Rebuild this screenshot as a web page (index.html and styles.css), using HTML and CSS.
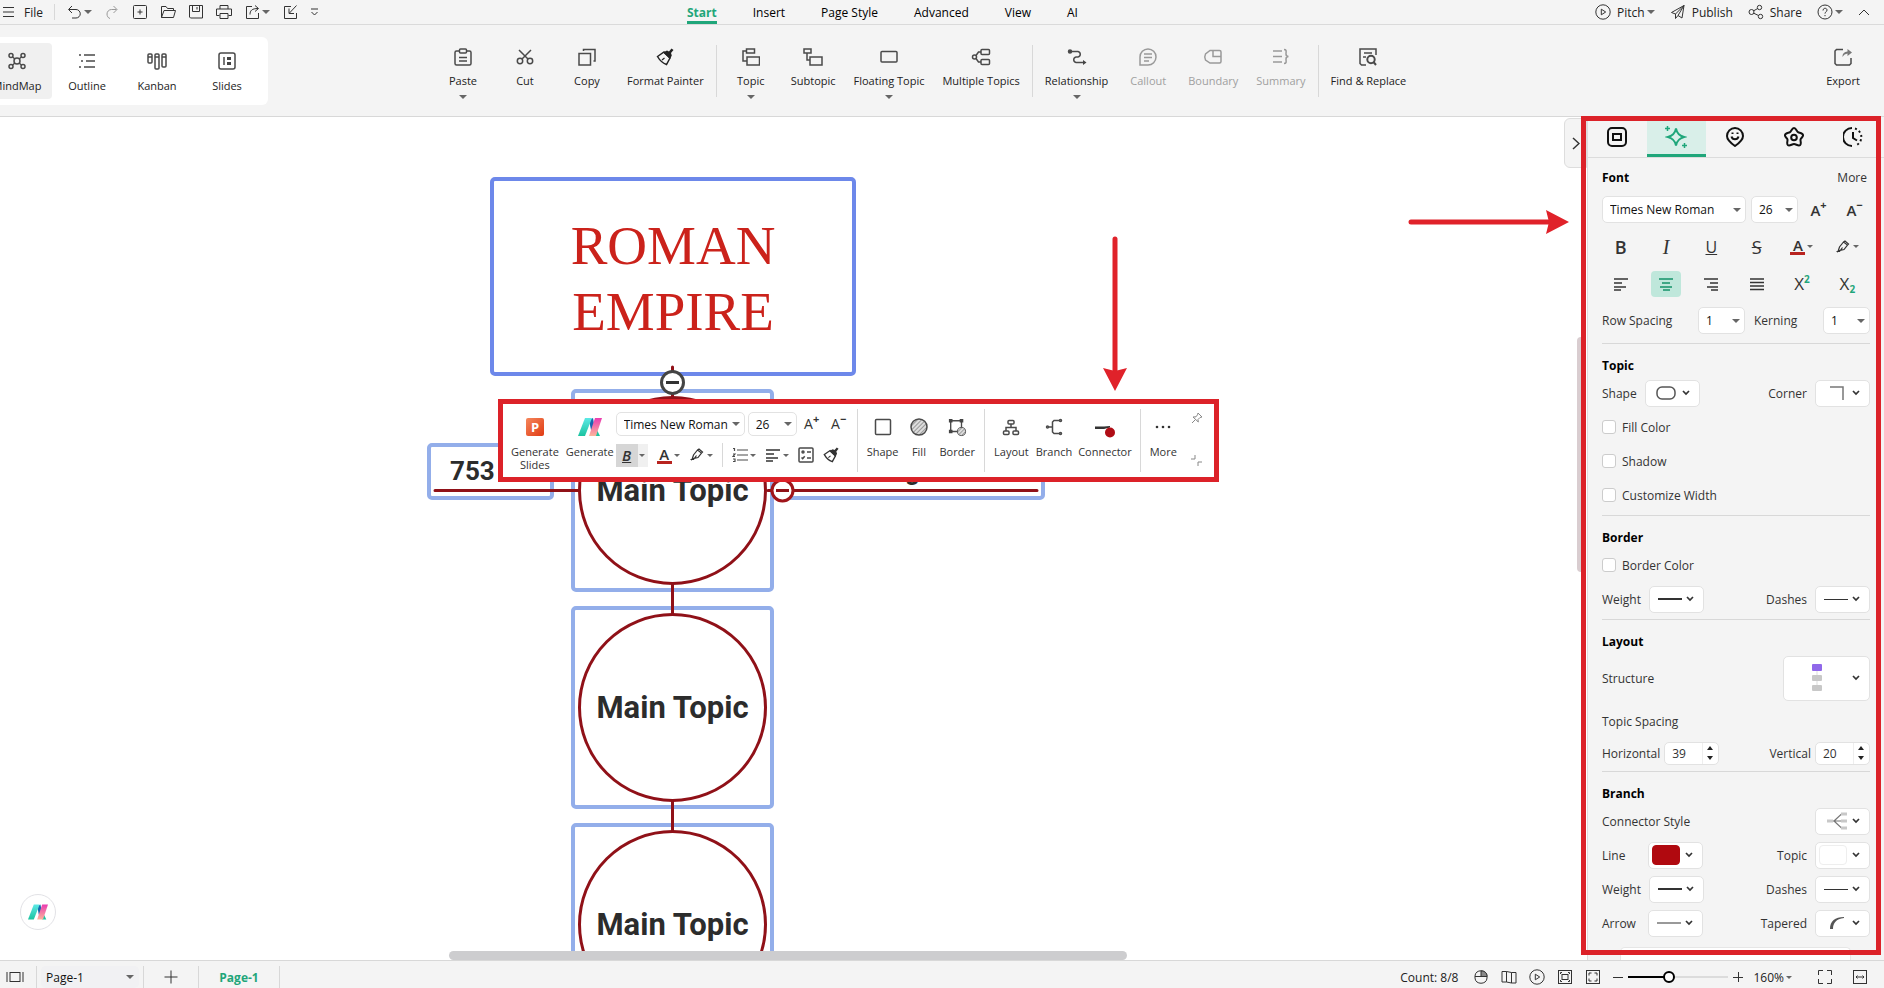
FILE: index.html
```
<!DOCTYPE html>
<html lang="en">
<head>
  <meta charset="UTF-8">
  <meta name="viewport" content="width=device-width, initial-scale=1.0">
  <title>Mind Map Editor</title>
  <link rel="stylesheet" href="styles.css">
</head>
<body>
  <!-- Shared icons -->
  <svg class="sprite" aria-hidden="true">
    <defs>
      <linearGradient id="teal" x1="0" y1="0" x2="0" y2="1"><stop offset="0" stop-color="#5ce9e6"/><stop offset="1" stop-color="#1cc3a0"/></linearGradient>
      <linearGradient id="pink" x1="0" y1="0" x2="0" y2="1"><stop offset="0" stop-color="#ea3bb0"/><stop offset="1" stop-color="#fbb59c"/></linearGradient>
      <linearGradient id="orange" x1="0" y1="0" x2="1" y2="1"><stop offset="0" stop-color="#f5875c"/><stop offset="1" stop-color="#e03a12"/></linearGradient>
      <pattern id="hatch" width="3" height="3" patternUnits="userSpaceOnUse" patternTransform="rotate(45)"><rect width="3" height="3" fill="#ddd"/><path d="M0 0V3" stroke="#999" stroke-width="2"/></pattern>
    </defs>
    <symbol id="i-logo" viewBox="0 0 24 18">
      <path d="M11 2l4-2 3 17h-4z" fill="#1766b0"/>
      <path d="M18 10l4 8h-5z" fill="#1cc3a0"/>
      <path d="M7 0h7L7 18H0z" fill="url(#teal)"/>
      <path d="M17 0h7l-6 18h-7z" fill="url(#pink)"/>
    </symbol>
    <symbol id="i-brush" viewBox="0 0 18 18">
      <path d="M1.500 8.500L8 4l6 6-3.500 6.500C6.500 15 3.500 12 1.500 8.500z" fill="none" stroke="currentColor" stroke-width="1.500"/>
      <path d="M7 4.500L11 2.500l2 1L15.500.5l2 1.500-2.500 3 .8 2.500L14 11z" fill="currentColor"/>
      <path d="M6 12l2.500-2" stroke="currentColor" stroke-width="1.200"/>
    </symbol>
    <symbol id="i-pen" viewBox="0 0 16 16">
      <path d="M3 12.500l1.500-4.500L8.500 3l4 3-3.500 4.500-4 .8zM8.500 3L10 2l3.500 3-1 1M1.500 12.500h3l3-4" fill="none" stroke="currentColor" stroke-width="1.200"/>
    </symbol>
    <symbol id="i-left" viewBox="0 0 16 14"><path d="M1 2h14M1 6h8M1 10h12M1 13h7" stroke="currentColor" stroke-width="1.500"/></symbol>
    <symbol id="i-down" viewBox="0 0 8 6"><path d="M1 1l3 3 3-3" fill="none" stroke="#333" stroke-width="1.700"/></symbol>
    <symbol id="i-play" viewBox="0 0 16 16"><circle cx="8" cy="8" r="7.200"/><path d="M6.300 5.200v5.600L10.700 8z"/></symbol>
  </svg>

  <!-- Title Bar -->
  <header class="topbar">
    <div class="quick">
      <button class="icon-btn file-btn"><svg class="line" width="11" height="12" viewBox="0 0 11 12"><path d="M0 1.500h11M0 6h11M0 10.500h11"/></svg>File</button>
      <span class="sep"></span>
      <button class="icon-btn" aria-label="Undo"><svg class="line" width="16" height="16" viewBox="0 0 16 16"><path d="M6 2L2.500 5.500 6 9M3 5.500h7a4 4 0 0 1 0 8.500H6"/></svg><i class="caret"></i></button>
      <button class="icon-btn muted" aria-label="Redo"><svg class="line" width="16" height="16" viewBox="0 0 16 16"><path d="M9.500 2L13 5.500 9.500 9M12.500 5.500H7.500a4.500 4.500 0 0 0-4.500 4.500c0 2 1 4 3 4.500"/></svg></button>
      <button class="icon-btn" aria-label="New"><svg class="line" width="16" height="16" viewBox="0 0 16 16"><rect x="1.500" y="1.500" width="13" height="13" rx="1"/><path d="M8 5.500v5M5.500 8h5"/></svg></button>
      <button class="icon-btn" aria-label="Open"><svg class="line" width="16" height="16" viewBox="0 0 16 16"><path d="M1.500 13.500v-11h4.500l1.500 2h6v2M1.500 13.500l2.500-7h11.500l-2 7z"/></svg></button>
      <button class="icon-btn" aria-label="Save"><svg class="line" width="16" height="16" viewBox="0 0 16 16"><path d="M1.500 1.500h13v12.500h-12l-1-1zM4.500 1.500v6h7v-6M9 3v2.500"/></svg></button>
      <button class="icon-btn" aria-label="Print"><svg class="line" width="16" height="16" viewBox="0 0 16 16"><path d="M4 5V1.500h8V5M3.500 11.500h-3V5h15v6.500h-3M4 9.500h8v5H4z"/></svg></button>
      <button class="icon-btn" aria-label="Share file"><svg class="line" width="16" height="16" viewBox="0 0 16 16"><path d="M8 2.500H2.500v12h12V9M6 10.500c0-4 2-6 8-6M11 1.500l3.500 3L11 7.500"/></svg><i class="caret"></i></button>
      <button class="icon-btn" aria-label="Import"><svg class="line" width="16" height="16" viewBox="0 0 16 16"><path d="M9 2.500H2.500v12h12V9M14.500 1.500L7.500 9M7 4.500V9.500h5"/></svg></button>
      <button class="icon-btn" aria-label="Customize"><svg class="line" width="9" height="10" viewBox="0 0 9 10"><path d="M1 2h7M1.500 5l3 3 3-3"/></svg></button>
    </div>
    <nav class="menu">
      <button class="menu-item active">Start</button>
      <button class="menu-item">Insert</button>
      <button class="menu-item">Page Style</button>
      <button class="menu-item">Advanced</button>
      <button class="menu-item">View</button>
      <button class="menu-item">AI</button>
    </nav>
    <div class="actions">
      <button class="icon-btn"><svg class="line gap" width="16" height="16"><use href="#i-play"/></svg>Pitch<i class="caret"></i></button>
      <button class="icon-btn"><svg class="line gap" width="16" height="16" viewBox="0 0 16 16"><path d="M1.500 8.500L14 1.500l-2 12.500-4-2.500-2.500 3V10zM14 1.500L5.500 10M14 1.500L8 11.500"/></svg>Publish</button>
      <button class="icon-btn"><svg class="line gap" width="16" height="16" viewBox="0 0 16 16"><circle cx="3.500" cy="8" r="2.500"/><circle cx="11.500" cy="3.500" r="2.200"/><circle cx="12.500" cy="12.500" r="2.200"/><path d="M5.700 6.800l4-2.300M5.700 9.200l4.800 2.300"/></svg>Share</button>
      <button class="icon-btn" aria-label="Help"><svg class="line" width="16" height="16" viewBox="0 0 16 16"><circle cx="8" cy="8" r="7"/><path d="M6 6.500c0-3 4-2.800 4-.4C10 8 8 7.600 8 9.600M8 11v1.200"/></svg><i class="caret"></i></button>
      <button class="icon-btn" aria-label="Collapse ribbon"><svg class="line" width="12" height="8" viewBox="0 0 12 8"><path d="M1 7l5-5 5 5"/></svg></button>
    </div>
  </header>

  <!-- Ribbon -->
  <section class="ribbon">
    <div class="views">
      <button class="view active"><svg class="bold" width="18" height="18" viewBox="0 0 18 18"><circle cx="9" cy="9" r="3"/><circle cx="3" cy="3.500" r="2"/><circle cx="15" cy="3.500" r="2"/><circle cx="3" cy="14.500" r="2"/><circle cx="15" cy="14.500" r="2"/><path d="M4.500 5L7 7M13.500 5L11 7M4.500 13L7 11M13.500 13L11 11"/></svg>MindMap</button>
      <button class="view"><svg class="bold" width="18" height="18" viewBox="0 0 18 18"><path d="M1 3h2M6 3h11M3 9h2M8 9h9M1 15h2M6 15h11"/></svg>Outline</button>
      <button class="view"><svg class="bold" width="20" height="18" viewBox="0 0 20 18"><rect x="1" y="2" width="4" height="9" rx="1"/><rect x="8" y="2" width="4" height="15" rx="1"/><rect x="15" y="2" width="4" height="13" rx="1"/><path d="M1 5h4M8 5h4M15 5h4"/></svg>Kanban</button>
      <button class="view"><svg class="bold" width="18" height="18" viewBox="0 0 18 18"><rect x="1" y="1" width="16" height="16" rx="2"/><path d="M6 5v8"/><path d="M9 5h4v3H9zM9 10h4v3H9z" fill="#444" stroke="none"/></svg>Slides</button>
    </div>
    <div class="tools">
      <button class="tool"><svg class="bold" width="18" height="18" viewBox="0 0 18 18"><path d="M5 3H2.500Q1 3 1 4.500V15.500Q1 17 2.500 17h13q1.500 0 1.500-1.500V4.500Q17 3 15.500 3H12"/><rect x="5.500" y="1" width="7" height="4" rx="1"/><path d="M5 9.500h8M5 13h8"/></svg>Paste<i class="caret"></i></button>
      <button class="tool"><svg class="bold" width="18" height="18" viewBox="0 0 18 18"><circle cx="4" cy="13" r="2.700"/><circle cx="14" cy="13" r="2.700"/><path d="M3 2l9 9M15 2l-9 9"/></svg>Cut</button>
      <button class="tool"><svg class="bold" width="18" height="18" viewBox="0 0 18 18"><rect x="1" y="5.500" width="11.500" height="11.500"/><path d="M5.500 3V1.500H17V13h-1.500"/></svg>Copy</button>
      <button class="tool"><svg width="18" height="18"><use href="#i-brush"/></svg>Format Painter</button>
      <span class="sep"></span>
      <button class="tool"><svg class="bold" width="18" height="18" viewBox="0 0 18 18"><rect x="4.500" y="1" width="8" height="4"/><rect x="5" y="9" width="12.500" height="8"/><path d="M4.500 3H1v10h4"/></svg>Topic<i class="caret"></i></button>
      <button class="tool"><svg class="bold" width="20" height="18" viewBox="0 0 20 18"><rect x="1" y="1" width="7" height="4"/><rect x="7" y="9" width="12" height="8"/><path d="M4 5v7h3"/></svg>Subtopic</button>
      <button class="tool"><svg class="bold" width="18" height="18" viewBox="0 0 18 18"><rect x="1" y="3.500" width="16" height="10.500" rx="1"/></svg>Floating Topic<i class="caret"></i></button>
      <button class="tool"><svg class="bold" width="20" height="18" viewBox="0 0 20 18"><circle cx="3.500" cy="9" r="2"/><rect x="10" y="1.500" width="8.500" height="5" rx="1"/><rect x="10" y="11.500" width="8.500" height="5" rx="1"/><path d="M5 7.500L7.500 4H10M5 10.500L7.500 14H10"/></svg>Multiple Topics</button>
      <span class="sep"></span>
      <button class="tool"><svg class="bold" width="20" height="18" viewBox="0 0 20 18"><path d="M3 3.500h8a2.800 2.800 0 0 1 0 5.500H9a2.800 2.800 0 0 0 0 5.500h8"/><circle cx="3" cy="3.500" r="1.500" fill="#444"/><path d="M16 12l3.500 2.500L16 17z" fill="#444" stroke="none"/></svg>Relationship<i class="caret"></i></button>
      <button class="tool" disabled><svg class="bold" width="18" height="18" viewBox="0 0 18 18"><path d="M1 17V9a8 8 0 1 1 8 8zM5 6h8M5 9.500h8M5 13h5"/></svg>Callout</button>
      <button class="tool" disabled><svg class="bold" width="20" height="18" viewBox="0 0 20 18"><path d="M7 2.500h9.500q1.500 0 1.500 1.500v9.500q0 1.500-1.500 1.500H7L2.500 12Q1 9 2.500 6zM10 2.500v6h8"/></svg>Boundary</button>
      <button class="tool" disabled><svg class="bold" width="18" height="18" viewBox="0 0 18 18"><path d="M1 3h9M1 8.500h9M1 14h9M12 1.500c3 0 2 2 2 4.500 0 1.500 1 2.500 2.500 2.500-1.500 0-2.500 1-2.500 2.500 0 2.500 1 4.500-2 4.500"/></svg>Summary</button>
      <span class="sep"></span>
      <button class="tool"><svg class="bold" width="18" height="18" viewBox="0 0 18 18"><path d="M7 17H2.500L1 15.500V1h16v6M5 5h8M4 9h3"/><circle cx="12" cy="11.500" r="3.700" stroke-width="2"/><path d="M14.500 14l2.500 3" stroke-width="2"/></svg>Find &amp; Replace</button>
    </div>
    <button class="tool export"><svg class="bold" width="18" height="18" viewBox="0 0 18 18"><path d="M9 1.500H2.500L1 3v12.500L2.500 17h13l1.500-1.500V10"/><path d="M8.500 9c0-4 2-5 5-5.500V1L18 4.500 13.500 8V5.500c-2 .3-4 1.500-5 3.500z" fill="#777" stroke="none"/></svg>Export</button>
  </section>

  <main class="workspace">
    <!-- Canvas -->
    <div class="canvas">
      <div class="node root"></div>
      <div class="node topic n1"></div>
      <div class="node topic n2"></div>
      <div class="node topic n3"></div>
      <div class="node date"></div>
      <div class="node event"></div>
      <svg class="links" width="1240" height="843" viewBox="0 0 1240 843">
        <g stroke="#901118" stroke-width="3" stroke-linecap="round" fill="none">
          <path d="M672.500 250V280M672.500 467V497M672.500 684V714"/>
          <path d="M435 373.500H578M768 373.500H1037"/>
          <circle cx="672.500" cy="373.500" r="93"/>
          <circle cx="672.500" cy="590.500" r="93"/>
          <circle cx="672.500" cy="807.500" r="93"/>
        </g>
        <circle cx="672.500" cy="265.500" r="11" fill="#fff" stroke="#444" stroke-width="3"/>
        <path d="M666 265.500h13" stroke="#333" stroke-width="3"/>
        <circle cx="782.500" cy="373.500" r="10.500" fill="#fff" stroke="#a0141a" stroke-width="3"/>
        <path d="M776 373.500h13" stroke="#901118" stroke-width="3"/>
      </svg>
      <p class="text title">ROMAN<br>EMPIRE</p>
      <p class="text t1">Main Topic</p>
      <p class="text t2">Main Topic</p>
      <p class="text t3">Main Topic</p>
      <p class="text year">753</p>
      <p class="text about">g</p>
      <svg class="arrow-right" width="164" height="26" viewBox="0 0 164 26"><path d="M4 13h140" stroke="#e0222a" stroke-width="5" stroke-linecap="round"/><path d="M139 1l23 12-23 12 3-12z" fill="#e0222a"/></svg>
      <svg class="arrow-down" width="26" height="158" viewBox="0 0 26 158"><path d="M13 4v134" stroke="#e0222a" stroke-width="5" stroke-linecap="round"/><path d="M1 133l12 23 12-23-12 3z" fill="#e0222a"/></svg>

      <!-- Floating Toolbar -->
      <div class="float-bar">
        <button class="f-tool slides-tool"><svg width="18" height="18" viewBox="0 0 18 18"><rect width="18" height="18" rx="2" fill="url(#orange)"/><text x="9" y="14" text-anchor="middle" class="p-mark">P</text></svg>Generate<br>Slides</button>
        <button class="f-tool generate-tool"><svg width="24" height="18"><use href="#i-logo"/></svg>Generate</button>
        <div class="f-font">
          <div class="f-row">
            <span class="select f-family"><select aria-label="Font family"><option>Times New Roman</option></select></span>
            <span class="select f-size"><select aria-label="Font size"><option>26</option></select></span>
            <button class="grow" aria-label="Increase font">A<sup>+</sup></button>
            <button class="grow" aria-label="Decrease font">A<sup>−</sup></button>
          </div>
          <div class="f-row second">
            <button class="f-bold"><b>B</b><span><i class="caret small"></i></span></button>
            <button class="f-icon"><span class="font-color">A</span><i class="caret small"></i></button>
            <button class="f-icon" aria-label="Highlight"><svg width="16" height="16"><use href="#i-pen"/></svg><i class="caret small"></i></button>
            <span class="sep"></span>
            <button class="f-icon" aria-label="Numbering"><svg class="bold" width="16" height="16" viewBox="0 0 16 16"><path d="M5 3h11M5 8h11M5 13h11M1 1.500h1.500V4M1 7h2L1 9.500h2M1 12h2v2.500H1" stroke-width="1.200"/></svg><i class="caret small"></i></button>
            <button class="f-icon" aria-label="Align"><svg width="16" height="14"><use href="#i-left"/></svg><i class="caret small"></i></button>
            <button class="f-icon" aria-label="Checklist"><svg class="bold" width="16" height="16" viewBox="0 0 16 16"><rect x="1" y="1" width="14" height="14" rx="1"/><circle cx="5" cy="5" r="1"/><path d="M3.500 10.500l1.200 1.200 2-2.500M9 5h4M9 11h4"/></svg></button>
            <button class="f-icon" aria-label="Format painter"><svg width="16" height="16"><use href="#i-brush"/></svg></button>
          </div>
        </div>
        <span class="sep"></span>
        <button class="f-tool"><svg class="bold" width="18" height="18" viewBox="0 0 18 18"><rect x="1.500" y="1.500" width="15" height="15" rx="1"/></svg>Shape</button>
        <button class="f-tool"><svg class="bold" width="18" height="18" viewBox="0 0 18 18"><circle class="hatched" cx="9" cy="9" r="8"/></svg>Fill</button>
        <button class="f-tool"><svg class="bold" width="20" height="20" viewBox="0 0 20 20"><path d="M3 3h12v12H3z"/><path d="M1 1h4v4H1zM13 1h4v4h-4zM1 13h4v4H1z" fill="#444" stroke="none"/><circle class="hatched" cx="15" cy="15" r="4.500" stroke-width="1"/></svg>Border</button>
        <span class="sep"></span>
        <button class="f-tool"><svg class="bold" width="18" height="18" viewBox="0 0 18 18"><rect x="6" y="2.500" width="6" height="3.500" rx="1"/><rect x="1.500" y="13" width="5.500" height="3.500" rx="1"/><rect x="11" y="13" width="5.500" height="3.500" rx="1"/><path d="M9 6v3.500M4 13V9.500h10V13"/></svg>Layout</button>
        <button class="f-tool tight"><svg class="bold" width="18" height="18" viewBox="0 0 18 18"><path d="M3 9h4.500M15 2.500H9L7.500 4v10L9 15.500h6"/><circle cx="2.500" cy="9" r="1"/><circle cx="15.500" cy="2.500" r="1"/><circle cx="15.500" cy="15.500" r="1"/></svg>Branch</button>
        <button class="f-tool tight"><svg width="22" height="18" viewBox="0 0 22 18"><path d="M1 8.500h9l6-.5v1.500L10 11H1z" fill="#333"/><circle cx="16" cy="14.500" r="5" fill="#b00d15"/></svg>Connector</button>
        <span class="sep"></span>
        <button class="f-tool"><svg width="18" height="18" viewBox="0 0 18 18"><g fill="#333"><circle cx="3" cy="9" r="1.300"/><circle cx="9" cy="9" r="1.300"/><circle cx="15" cy="9" r="1.300"/></g></svg>More</button>
        <div class="f-corner">
          <button aria-label="Pin"><svg class="line" width="12" height="12" viewBox="0 0 12 12"><path d="M7 1l4 4-2 .5-2 2 .3 2.500L2 5l3-.2 1.500-2zM4.500 7.500L1 11"/></svg></button>
          <button aria-label="Minimize toolbar"><svg class="line" width="12" height="12" viewBox="0 0 12 12"><path d="M4 0v4H0M7 11V7h4"/></svg></button>
        </div>
      </div>

      <button class="collapse" aria-label="Collapse panel"><svg width="8" height="13" viewBox="0 0 8 13"><path d="M1 1l6 5.500L1 12" fill="none" stroke="#333" stroke-width="1.500"/></svg></button>
      <button class="ai-badge" aria-label="AI assistant"><svg width="20" height="16"><use href="#i-logo"/></svg></button>
      <div class="scroll-x"></div>
      <div class="scroll-y"></div>
    </div>

    <!-- Format Panel -->
    <aside class="panel">
      <div class="panel-tabs">
        <button aria-label="Shape"><svg class="heavy" width="20" height="20" viewBox="0 0 20 20"><rect x="1" y="1" width="18" height="18" rx="4"/><rect x="6" y="7" width="8" height="6"/></svg></button>
        <button class="active" aria-label="Style"><svg class="heavy" width="22" height="24" viewBox="0 0 22 24"><path d="M11 3.500c1 5 3 7 8 8.500-5 1.500-7 3.500-8 8.500-1-5-3-7-8-8.500 5-1.500 7-3.500 8-8.500z"/><path d="M2.500 1v5M0 3.500h5M19.500 18v5M17 20.500h5" stroke-width="1.500"/></svg></button>
        <button aria-label="Sticker"><svg class="heavy" width="20" height="20" viewBox="0 0 20 20"><path d="M10 19C5 15.500 2 13 2 9a8 8 0 0 1 16 0c0 4-3 6.500-8 10zM6.500 9.500a3.600 3.600 0 0 0 7 0M7.500 5.500v1.500M12.500 5.500v1.500"/></svg></button>
        <button aria-label="Theme"><svg class="heavy" width="20" height="20" viewBox="0 0 20 20"><path d="M10 1c2.200 0 2.800 3.800 4.200 4.300C16 6 18.600 6 19 8c.4 2-2.300 3-2.500 4.700-.2 1.700 1.200 4.300-.5 5.500-1.700 1.200-4-1.200-6-1.200s-4.300 2.400-6 1.200c-1.700-1.200-.3-3.800-.5-5.500C3.300 11 .6 10 1 8c.4-2 3-2 4.800-2.700C7.200 4.800 7.800 1 10 1z"/><circle cx="10" cy="10.500" r="2.800"/></svg></button>
        <button aria-label="History"><svg class="heavy" width="20" height="20" viewBox="0 0 20 20"><path d="M9 1a9 9 0 0 0 0 18M10 5v6l4 2.500"/><path d="M12 1.500a9 9 0 0 1 0 17.200" stroke-dasharray="2 2.500"/></svg></button>
      </div>

      <section class="group font-group">
        <div class="head"><h2>Font</h2><a href="#">More</a></div>
        <div class="row">
          <span class="select family"><select aria-label="Font"><option>Times New Roman</option></select></span>
          <span class="select size"><select aria-label="Size"><option>26</option></select></span>
          <button class="grow heavy-a" aria-label="Increase font">A<sup>+</sup></button>
          <button class="grow heavy-a" aria-label="Decrease font">A<sup>−</sup></button>
        </div>
        <div class="row formats">
          <button class="letter"><b>B</b></button>
          <button class="letter italic">I</button>
          <button class="letter underline">U</button>
          <button class="letter strike">S</button>
          <button><span class="font-color">A</span><i class="caret small"></i></button>
          <button aria-label="Highlight"><svg width="16" height="16"><use href="#i-pen"/></svg><i class="caret small"></i></button>
        </div>
        <div class="row formats">
          <button aria-label="Align left"><svg width="16" height="14"><use href="#i-left"/></svg></button>
          <button class="on" aria-label="Align center"><span><svg width="14" height="14" viewBox="0 0 14 14"><path d="M0 2h14M3 6h8M1 10h12M4 13h7" stroke="currentColor" stroke-width="1.500"/></svg></span></button>
          <button aria-label="Align right"><svg width="14" height="14" viewBox="0 0 14 14"><path d="M0 2h14M6 6h8M3 10h11M7 13h7" stroke="currentColor" stroke-width="1.500"/></svg></button>
          <button aria-label="Justify"><svg width="14" height="14" viewBox="0 0 14 14"><path d="M0 2h14M0 5.500h14M0 9h14M0 12.500h14" stroke="currentColor" stroke-width="1.500"/></svg></button>
          <button class="script">X<sup>2</sup></button>
          <button class="script">X<sub>2</sub></button>
        </div>
        <div class="row">
          <label for="rowSpacing">Row Spacing</label>
          <span class="select size push"><select id="rowSpacing"><option>1</option></select></span>
          <label for="kerning" class="kern">Kerning</label>
          <span class="select size push"><select id="kerning"><option>1</option></select></span>
        </div>
      </section>

      <section class="group">
        <div class="head"><h2>Topic</h2></div>
        <div class="row">
          <label for="shape">Shape</label>
          <button class="drop" id="shape"><svg width="20" height="14" viewBox="0 0 20 14"><rect x="1" y="1" width="18" height="12" rx="5" fill="none" stroke="#555" stroke-width="1.500"/></svg><svg width="8" height="6"><use href="#i-down"/></svg></button>
          <label for="corner" class="right">Corner</label>
          <button class="drop" id="corner"><svg width="24" height="14" viewBox="0 0 24 14"><path d="M4 1h13v13" fill="none" stroke="#777" stroke-width="1.500"/></svg><svg width="8" height="6"><use href="#i-down"/></svg></button>
        </div>
        <div class="row"><label class="check"><input type="checkbox">Fill Color</label></div>
        <div class="row"><label class="check"><input type="checkbox">Shadow</label></div>
        <div class="row"><label class="check"><input type="checkbox">Customize Width</label></div>
      </section>

      <section class="group">
        <div class="head"><h2>Border</h2></div>
        <div class="row"><label class="check"><input type="checkbox">Border Color</label></div>
        <div class="row">
          <label for="borderWeight">Weight</label>
          <button class="drop" id="borderWeight"><span class="rule thick"></span><svg width="8" height="6"><use href="#i-down"/></svg></button>
          <label for="borderDashes" class="right">Dashes</label>
          <button class="drop" id="borderDashes"><span class="rule"></span><svg width="8" height="6"><use href="#i-down"/></svg></button>
        </div>
      </section>

      <section class="group">
        <div class="head"><h2>Layout</h2></div>
        <div class="row tall">
          <label for="structure">Structure</label>
          <button class="drop structure" id="structure"><svg width="10" height="28" viewBox="0 0 10 28"><path d="M5 7v14" stroke="#ddd"/><rect y="0" width="10" height="7" rx="1" fill="#9068ea"/><rect y="11" width="10" height="6" rx="1" fill="#c8c8c8"/><rect y="21" width="10" height="6" rx="1" fill="#c8c8c8"/></svg><svg width="8" height="6"><use href="#i-down"/></svg></button>
        </div>
        <div class="row"><span>Topic Spacing</span></div>
        <div class="row short">
          <label for="horizontal">Horizontal</label>
          <span class="spin"><input id="horizontal" type="text" value="39"><span class="steps"><button class="up" aria-label="Increase"></button><button class="dn" aria-label="Decrease"></button></span></span>
          <label for="vertical" class="right">Vertical</label>
          <span class="spin"><input id="vertical" type="text" value="20"><span class="steps"><button class="up" aria-label="Increase"></button><button class="dn" aria-label="Decrease"></button></span></span>
        </div>
      </section>

      <section class="group last">
        <div class="head"><h2>Branch</h2></div>
        <div class="row">
          <label for="connectorStyle">Connector Style</label>
          <button class="drop push" id="connectorStyle"><svg width="22" height="18" viewBox="0 0 22 18"><path d="M2 9h6M16 9H8l8-7.500h4M8 9l8 7.500h4" fill="none" stroke="#777" stroke-width="1.200"/><path d="M1 9h6M15 9h6M15 2h6M15 16h6" stroke="#c8c8c8" stroke-width="3"/></svg><svg width="8" height="6"><use href="#i-down"/></svg></button>
        </div>
        <div class="row">
          <label for="lineColor" class="fixed">Line</label>
          <button class="drop" id="lineColor"><span class="swatch red"></span><svg width="8" height="6"><use href="#i-down"/></svg></button>
          <label for="topicColor" class="right">Topic</label>
          <button class="drop" id="topicColor"><span class="swatch"></span><svg width="8" height="6"><use href="#i-down"/></svg></button>
        </div>
        <div class="row">
          <label for="branchWeight" class="fixed">Weight</label>
          <button class="drop" id="branchWeight"><span class="rule thick"></span><svg width="8" height="6"><use href="#i-down"/></svg></button>
          <label for="branchDashes" class="right">Dashes</label>
          <button class="drop" id="branchDashes"><span class="rule"></span><svg width="8" height="6"><use href="#i-down"/></svg></button>
        </div>
        <div class="row">
          <label for="arrow" class="fixed">Arrow</label>
          <button class="drop" id="arrow"><span class="rule thick grey"></span><svg width="8" height="6"><use href="#i-down"/></svg></button>
          <label for="tapered" class="right">Tapered</label>
          <button class="drop" id="tapered"><svg width="24" height="14" viewBox="0 0 24 14"><path d="M18 1C9 1 4 5 4 13h3C7 7 10 3 18 2z" fill="#555"/></svg><svg width="8" height="6"><use href="#i-down"/></svg></button>
        </div>
      </section>
      <div class="next-card"></div>
    </aside>
    <div class="marker"></div>
  </main>

  <!-- Status Bar -->
  <footer class="status">
    <button aria-label="Page thumbnails"><svg class="line" width="18" height="12" viewBox="0 0 18 12"><rect x="4" y="1.500" width="10" height="9"/><path d="M1 1v10M17 1v10"/></svg></button>
    <span class="sep"></span>
    <span class="select page-select"><select aria-label="Page"><option>Page-1</option></select></span>
    <span class="sep"></span>
    <button class="add" aria-label="Add page"><svg class="line" width="14" height="14" viewBox="0 0 14 14"><path d="M7 .5v13M.5 7h13"/></svg></button>
    <span class="sep"></span>
    <button class="page-tab">Page-1</button>
    <span class="sep"></span>
    <div class="status-right">
      <span class="count">Count: 8/8</span>
      <button aria-label="Mouse mode"><svg class="line" width="16" height="16" viewBox="0 0 16 16"><path d="M2 7c0-7 12-7 12 0v2c0 7-12 7-12 0zM2 7.500h12"/><path d="M8 2c4 0 6 2 6 5.500H8z" fill="#888"/></svg></button>
      <button aria-label="Map"><svg class="line" width="16" height="16" viewBox="0 0 16 16"><path d="M1 2.500h4.500l5 1H15v10.500h-4.500l-5-1H1zM5.500 2.500v10.500M10.500 3.500v10.500"/></svg></button>
      <button aria-label="Play"><svg class="line" width="16" height="16"><use href="#i-play"/></svg></button>
      <button aria-label="Fit page"><svg class="line" width="16" height="16" viewBox="0 0 16 16"><rect x="1.500" y="1.500" width="13" height="13"/><rect x="5" y="5.500" width="6" height="5"/><path d="M3.500 5V3.500H5M11 3.500h1.500V5M3.500 11v1.500H5M11 12.500h1.500V11"/></svg></button>
      <button aria-label="Center view"><svg class="line" width="16" height="16" viewBox="0 0 16 16"><rect x="1.500" y="1.500" width="13" height="13"/><path d="M4 6.500V4h2.500M9.500 4H12v2.500M4 9.500V12h2.500M9.500 12H12V9.500"/></svg></button>
      <div class="zoom">
        <button aria-label="Zoom out"><svg class="line" width="10" height="10" viewBox="0 0 10 10"><path d="M0 5.500h10"/></svg></button>
        <input type="range" min="0" max="100" value="39" aria-label="Zoom">
        <button aria-label="Zoom in"><svg class="line" width="10" height="10" viewBox="0 0 10 10"><path d="M0 5.500h10M5.500 0v10"/></svg></button>
      </div>
      <button class="percent">160%<i class="caret small"></i></button>
      <button class="full" aria-label="Full screen"><svg class="line" width="16" height="16" viewBox="0 0 16 16"><path d="M1.500 6V1.500H6M10 1.500h4.500V6M1.500 10v4.500H6M10 14.500h4.500V10"/></svg></button>
      <button class="fit" aria-label="Fit width"><svg class="line" width="16" height="16" viewBox="0 0 16 16"><rect x="1.500" y="1.500" width="13" height="13"/><path d="M4 8h8M5.500 6.500L4 8l1.500 1.500M10.500 6.500L12 8l-1.500 1.500"/></svg></button>
    </div>
  </footer>
</body>
</html>
```

FILE: styles.css
```
/* Global Styles */
* {
  margin: 0;
  padding: 0;
  box-sizing: border-box;
}

body {
  display: flex;
  flex-direction: column;
  height: 100vh;
  overflow: hidden;
  background: #f4f4f4;
  color: #222;
  font-family: 'Open Sans', 'Noto Sans', sans-serif;
  font-size: 12px;
}

button,
input,
select {
  font: inherit;
  color: inherit;
  background: none;
  border: none;
}

button {
  display: flex;
  align-items: center;
  justify-content: center;
  white-space: nowrap;
}

svg {
  flex: none;
}

.sprite {
  position: absolute;
  width: 0;
  height: 0;
}

/* Icon strokes */
.line {
  fill: none;
  stroke: #333;
  stroke-width: 1;
}

.bold {
  fill: none;
  stroke: #4a4a4a;
  stroke-width: 1.5;
}

.heavy {
  fill: none;
  stroke: currentColor;
  stroke-width: 2;
}

.hatched {
  fill: url(#hatch);
}

.caret {
  border: 4px solid transparent;
  border-top: 4px solid #666;
  border-bottom: none;
}

.caret.small {
  border-width: 3px;
  border-top-width: 3px;
  border-bottom: none;
  margin-left: 2px;
}

.sep {
  width: 1px;
  background: #d8d8d8;
}

/* Title Bar */
.topbar {
  display: flex;
  height: 25px;
  border-bottom: 1px solid #dadada;
}

.quick {
  display: flex;
  align-items: center;
  gap: 12px;
  width: 687px;
  padding-left: 3px;
}

.quick .sep {
  height: 16px;
  margin: 0 -1px;
}

.icon-btn {
  gap: 2px;
}

.file-btn {
  gap: 10px;
}

.muted svg {
  stroke: #999;
}

.menu {
  display: flex;
  gap: 36px;
}

.menu-item {
  border-bottom: 3px solid transparent;
  border-top: 3px solid transparent;
  color: #000;
}

.menu-item.active {
  color: #1fa67a;
  font-weight: bold;
  border-bottom-color: #1fa67a;
}

.actions {
  display: flex;
  align-items: center;
  gap: 15px;
  margin-left: auto;
  padding-right: 14px;
}

.actions .gap {
  margin-right: 4px;
}

/* Ribbon */
.ribbon {
  display: flex;
  height: 92px;
  border-bottom: 1px solid #d8d8d8;
  font-size: 11px;
}

.views {
  display: flex;
  height: 68px;
  margin: 12px 164px 0 -24px;
  padding: 6px;
  background: #fff;
  border-radius: 6px;
}

.view {
  flex-direction: column;
  gap: 8px;
  width: 70px;
  padding-top: 2px;
  border-radius: 4px;
}

.view.active {
  background: #f0f0f0;
}

.tools {
  display: flex;
}

.tool {
  flex-direction: column;
  justify-content: flex-start;
  gap: 7px;
  min-width: 62px;
  padding: 23px 9px 0;
}

.tool:disabled {
  color: #a0a0a0;
}

.tool:disabled svg {
  stroke: #999;
}

.tools .sep {
  height: 52px;
  margin: 20px 3px 0;
}

.export {
  margin-left: auto;
  margin-right: 10px;
}

/* Canvas */
.workspace {
  position: relative;
  display: flex;
  flex: 1;
  min-height: 0;
}

.canvas {
  position: relative;
  flex: 1;
  overflow: hidden;
  background: #fff;
}

.node {
  position: absolute;
  border: 4px solid #93aeea;
  border-radius: 5px;
}

.root {
  left: 490px;
  top: 60px;
  width: 366px;
  height: 199px;
  border-color: #6d88ea;
}

.topic {
  left: 571px;
  width: 203px;
  height: 203px;
}

.n1 {
  top: 272px;
}

.n2 {
  top: 489px;
}

.n3 {
  top: 706px;
}

.date {
  left: 427px;
  top: 326px;
  width: 127px;
  height: 57px;
}

.event {
  left: 778px;
  top: 326px;
  width: 267px;
  height: 57px;
}

.links {
  position: absolute;
  left: 0;
  top: 0;
}

.text {
  position: absolute;
  left: 571px;
  width: 203px;
  text-align: center;
  white-space: nowrap;
  color: #2c2c2c;
  font: bold 31px/40px Roboto, sans-serif;
}

.title {
  left: 490px;
  top: 96px;
  width: 366px;
  color: #cb221b;
  font: 55px/66px 'Liberation Serif', serif;
}

.t1 {
  top: 354px;
}

.t2 {
  top: 571px;
}

.t3 {
  top: 788px;
}

.year,
.about {
  top: 334px;
  left: 450px;
  width: auto;
  font-size: 26px;
}

.about {
  left: 905px;
}

.arrow-right {
  position: absolute;
  left: 1407px;
  top: 92px;
}

.arrow-down {
  position: absolute;
  left: 1102px;
  top: 118px;
}

.collapse {
  position: absolute;
  top: 1px;
  right: 0;
  width: 23px;
  height: 50px;
  background: #f4f4f4;
  border: 1px solid #ddd;
  border-radius: 6px 0 0 6px;
}

.ai-badge {
  position: absolute;
  left: 20px;
  bottom: 30px;
  width: 36px;
  height: 36px;
  background: #fff;
  border: 1px solid #e2e2e6;
  border-radius: 50%;
}

.scroll-x {
  position: absolute;
  left: 449px;
  bottom: 0;
  width: 678px;
  height: 9px;
  background: #cdcdcf;
  border-radius: 5px;
}

.scroll-y {
  position: absolute;
  right: 2px;
  top: 220px;
  width: 8px;
  height: 235px;
  background: #d9cdd0;
  border-radius: 4px;
}

/* Floating Toolbar */
.float-bar {
  position: absolute;
  left: 498px;
  top: 282px;
  display: flex;
  height: 83px;
  padding: 5px 11px 5px 3px;
  background: #fff;
  border: 5px solid #dc2229;
  font-size: 11px;
  line-height: 13px;
  color: #333;
}

.f-tool {
  display: block;
  min-width: 33px;
  padding: 0 4px;
  text-align: center;
}

.f-tool svg {
  display: block;
  height: 18px;
  margin: 0 auto 9px;
  overflow: visible;
}

.slides-tool {
  padding: 0 5px;
}

.generate-tool {
  padding: 0 2px;
}

.tight {
  padding: 0 3px;
}

.p-mark {
  font: bold 13px 'Open Sans', sans-serif;
  fill: #fff;
}

.float-bar > .sep {
  margin: 0 5px;
}

.float-bar > button {
  align-self: flex-start;
  margin-top: 9px;
}

.f-font {
  width: 236px;
  padding-top: 3px;
}

.f-row {
  display: flex;
  align-items: center;
  gap: 3px;
  height: 24px;
}

.f-row.second {
  gap: 9px;
  margin-top: 7px;
}

.f-row .sep {
  height: 24px;
}

.f-family {
  width: 129px;
}

.f-size {
  width: 49px;
}

.grow {
  width: 24px;
  font-size: 14px;
  align-items: flex-start;
  line-height: 20px;
}

.grow sup {
  font-size: 11px;
  line-height: 10px;
  font-weight: bold;
}

.f-bold {
  height: 23px;
  background: #d6d6d6;
}

.f-bold b {
  width: 22px;
  font: italic 600 15px 'Open Sans', sans-serif;
  text-decoration: underline;
}

.f-bold span {
  display: flex;
  align-items: center;
  width: 10px;
  height: 23px;
  background: #f0f0f0;
}

.f-bold .caret {
  margin-left: 1px;
}

.font-color {
  width: 15px;
  border-bottom: 3px solid #b8231f;
  font-size: 15px;
  font-weight: 600;
  line-height: 14px;
  text-align: center;
}

.f-corner {
  display: flex;
  flex-direction: column;
  justify-content: space-between;
  margin-left: 10px;
  padding: 3px 0 5px;
}

.f-corner .line {
  stroke: #888;
}

/* Form controls */
.select {
  position: relative;
  display: flex;
  background: #fff;
  border: 1px solid #e2e2e2;
  border-radius: 5px;
  font-size: 12px;
  color: #111;
}

.select select {
  appearance: none;
  width: 100%;
  height: 22px;
  padding-left: 7px;
}

.select::after {
  content: '';
  position: absolute;
  right: 4px;
  top: 50%;
  margin-top: -2px;
  border: 4px solid transparent;
  border-top: 4px solid #666;
  border-bottom: none;
  pointer-events: none;
}

.panel .select select {
  height: 25px;
}

.drop {
  justify-content: space-between;
  width: 55px;
  height: 27px;
  padding: 0 9px 0 8px;
  background: #fff;
  border: 1px solid #e2e2e2;
  border-radius: 5px;
}

.drop svg:first-child {
  margin-left: 2px;
}

.rule {
  width: 24px;
  height: 1px;
  background: #333;
}

.rule.thick {
  height: 2px;
}

.rule.grey {
  background: #999;
}

.swatch {
  width: 28px;
  height: 20px;
  margin-left: -5px;
  border: 1px solid #eee;
  border-radius: 4px;
}

.swatch.red {
  background: #b0090f;
  border-color: #b0090f;
}

.check {
  display: flex;
  align-items: center;
  gap: 6px;
}

.check input {
  appearance: none;
  width: 14px;
  height: 14px;
  background: #fff;
  border: 1px solid #ccc;
  border-radius: 3px;
}

.spin {
  display: flex;
  width: 55px;
  height: 23px;
  margin-left: -4px;
  background: #fff;
  border: 1px solid #e2e2e2;
  border-radius: 5px;
}

.spin input {
  flex: 1;
  min-width: 0;
  padding-left: 7px;
}

.steps {
  display: flex;
  flex-direction: column;
  justify-content: center;
  gap: 6px;
  width: 16px;
  padding-left: 4px;
  border-left: 1px solid #eee;
}

.up,
.dn {
  width: 6px;
  border: 3px solid transparent;
}

.up {
  border-bottom: 4px solid #222;
  border-top: none;
}

.dn {
  border-top: 4px solid #222;
  border-bottom: none;
}

/* Format Panel */
.panel {
  display: flex;
  flex-direction: column;
  width: 297px;
  overflow: hidden;
  border-left: 1px solid #ddd;
  color: #333;
}

.panel-tabs {
  display: grid;
  grid-template-columns: repeat(5, 1fr);
  height: 41px;
  padding-right: 2px;
  border-bottom: 1px solid #dcdcdc;
  color: #111;
}

.panel-tabs button {
  padding-top: 2px;
  border-bottom: 3px solid transparent;
}

.panel-tabs .active {
  background: #d9efe9;
  border-bottom-color: #1fa67a;
  color: #1fa67a;
}

.group {
  margin: 0 14px;
  padding: 10px 0 3px;
  border-bottom: 1px solid #d8d8d8;
}

.group.last {
  border: none;
}

.head {
  display: flex;
  align-items: center;
  justify-content: space-between;
  height: 22px;
}

.head h2 {
  font-size: 12px;
  color: #000;
}

.head a {
  margin-right: 3px;
  color: #333;
  text-decoration: none;
}

.row {
  display: flex;
  align-items: center;
  gap: 8px;
  height: 34px;
}

.row.tall {
  height: 52px;
}

.row.short {
  height: 30px;
}

.right,
.push {
  margin-left: auto;
}

.fixed {
  min-width: 38px;
}

.structure {
  width: 87px;
  height: 45px;
  margin-left: auto;
}

.structure svg:first-child {
  margin-left: 20px;
}

.font-group {
  padding: 8px 0 4px;
}

.font-group .head {
  margin-bottom: 3px;
}

.font-group .row {
  height: 37px;
  gap: 5px;
}

.family {
  width: 144px;
}

.size {
  width: 47px;
}

.heavy-a {
  flex: 1;
  font-size: 15px;
  font-weight: 600;
}

.kern {
  margin-left: 4px;
}

.font-group .formats {
  display: grid;
  grid-template-columns: repeat(6, 1fr);
  gap: 0;
  margin-left: -4px;
}

.letter {
  font-size: 18px;
  line-height: 20px;
}

.letter b {
  font-weight: 600;
}

.italic {
  font-family: 'Liberation Serif', serif;
  font-style: italic;
  font-size: 20px;
}

.underline {
  text-decoration: underline;
  font-size: 16px;
}

.strike {
  text-decoration: line-through;
}

.on span {
  display: flex;
  align-items: center;
  justify-content: center;
  width: 30px;
  height: 26px;
  background: #bfe7db;
  border-radius: 4px;
  color: #14936a;
}

.script {
  font-size: 17px;
  line-height: 20px;
}

.script sup,
.script sub {
  font-size: 10px;
  font-weight: bold;
  line-height: 14px;
  color: #1fa67a;
}

.script sup {
  margin-bottom: 10px;
}

.script sub {
  margin-top: 10px;
}

.next-card {
  flex: 1;
  margin: 4px 33px 0 32px;
  background: #fff;
  border: 1px solid #e6e6e6;
  border-bottom: none;
  border-radius: 5px 5px 0 0;
}

.marker {
  position: absolute;
  top: -1px;
  right: 3px;
  bottom: 5px;
  width: 300px;
  border: 5px solid #dc2229;
  pointer-events: none;
}

/* Status Bar */
.status {
  display: flex;
  align-items: center;
  height: 28px;
  padding: 5px 16px 0 6px;
  border-top: 1px solid #d8d8d8;
}

.status > .sep {
  height: 22px;
}

.status > .sep:nth-child(2) {
  margin-left: 12px;
}

.page-select {
  width: 98px;
  margin: 0 4px;
  background: #f1f1f3;
  border-color: #f1f1f3;
}

.page-select select {
  height: 20px;
  padding-left: 4px;
}

.add {
  width: 54px;
}

.page-tab {
  width: 80px;
  color: #1fa67a;
  font-weight: bold;
}

.status-right {
  display: flex;
  align-items: center;
  gap: 12px;
  margin-left: auto;
}

.count {
  margin-right: 3px;
}

.zoom {
  display: flex;
  align-items: center;
  gap: 5px;
  margin-right: -2px;
}

.zoom input {
  appearance: none;
  width: 100px;
  height: 12px;
  background: linear-gradient(to right, #000 40%, #dcdcdc 40%) center / 100% 2px no-repeat;
}

.zoom input::-webkit-slider-thumb {
  appearance: none;
  width: 12px;
  height: 12px;
  background: #fff;
  border: 2px solid #000;
  border-radius: 50%;
}

.full {
  margin-left: 13px;
}

.fit {
  margin-left: 7px;
}
```
